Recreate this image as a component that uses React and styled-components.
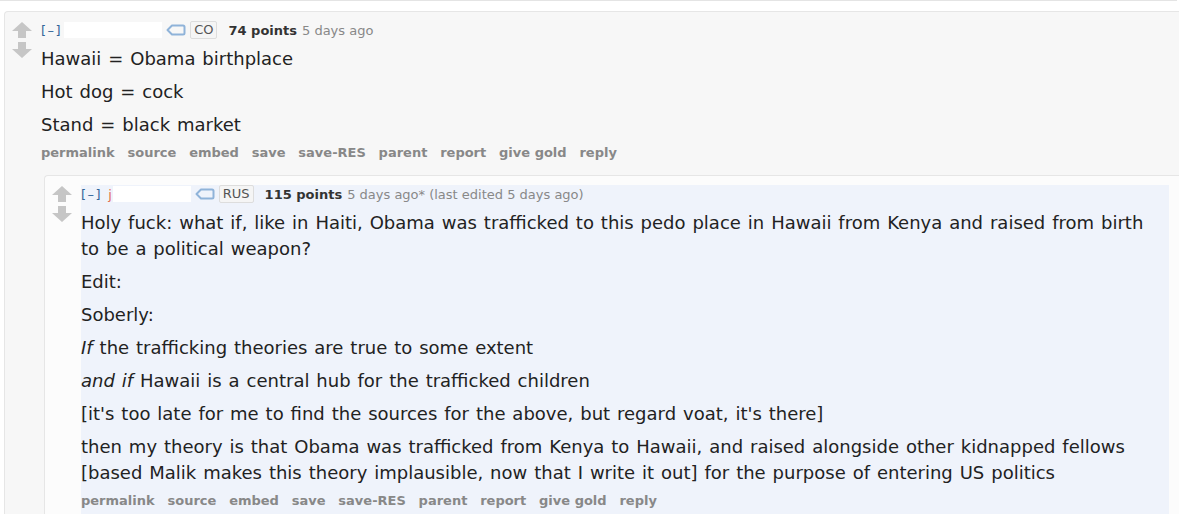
import React from "react";
import styled, { createGlobalStyle } from "styled-components";

const GlobalStyle = createGlobalStyle`
  body {
    margin: 0;
    background: #fff;
    font-family: "DejaVu Sans", Verdana, sans-serif;
    color: #222;
  }
`;

const Page = styled.div`
  width: 1179px;
  height: 517px;
  overflow: hidden;
`;

const PrevEdge = styled.div`
  height: 0;
  margin-right: 2px;
  margin-bottom: 10px;
  border-bottom: 1px solid #e4e4e4;
`;

const Comment = styled.div`
  margin-left: ${(p) => p.$left}px;
  background: ${(p) => p.$bg};
  border: 1px solid #e6e6e6;
  border-right: none;
  border-bottom: none;
  border-top-left-radius: 4px;
  padding-top: ${(p) => p.$pad}px;
  display: flex;
  flex-direction: column;
`;

const Row = styled.div`
  display: flex;
  align-items: flex-start;
`;

const Votes = styled.div`
  width: 36px;
  flex-shrink: 0;
  display: flex;
  flex-direction: column;
  align-items: flex-start;
  padding-left: 7px;
  padding-top: ${(p) => p.$top}px;
  gap: 4px;
  box-sizing: border-box;
`;

const Entry = styled.div`
  flex: 1;
  background: ${(p) => p.$bg || "transparent"};
  margin-right: ${(p) => p.$right || 0}px;
  padding-top: ${(p) => p.$top}px;
  padding-bottom: ${(p) => p.$bottom}px;
`;

const Tagline = styled.div`
  display: flex;
  align-items: center;
  font-size: 13px;
  color: #888;
  height: 18px;
  white-space: nowrap;
`;

const Expand = styled.span`
  color: #369;
  font-size: 13px;
  letter-spacing: 1.5px;
  margin-right: ${(p) => p.$gap}px;
`;

const Redacted = styled.span`
  display: inline-block;
  width: ${(p) => p.$w}px;
  height: 16px;
  background: #fff;
`;

const Stray = styled.span`
  color: #e4714f;
  font-size: 13px;
  margin-right: 1px;
`;

const Flair = styled.span`
  display: inline-block;
  margin-left: 4px;
  border: 1px solid #ddd;
  background: #f5f5f5;
  color: #545454;
  font-size: 13px;
  padding: 1px 3px;
  border-radius: 2px;
  line-height: 14px;
`;

const Score = styled.b`
  color: #333;
  margin-left: 11px;
  margin-right: 5px;
  font-size: 13px;
`;

const Body = styled.div`
  font-size: 18px;
  line-height: 26px;
  word-spacing: 1.2px;
  color: #222;
  margin-top: ${(p) => p.$top}px;
  padding-right: 20px;
  p {
    margin: 0 0 7px 0;
  }
`;

const Buttons = styled.ul`
  list-style: none;
  margin: 0;
  padding: 0;
  display: flex;
  gap: 12.8px;
  margin-top: ${(p) => p.$top}px;
  li {
    font-size: 13px;
    font-weight: bold;
    color: #888;
  }
`;

const Arrow = ({ down }) => (
  <svg width="20" height="16" viewBox="0 0 20 16">
    {down ? (
      <path d="M6 0 H14 V7 H20 L10 16 L0 7 H6 Z" fill="#c6c6c6" />
    ) : (
      <path d="M10 0 L20 9 H14 V16 H6 V9 H0 Z" fill="#c6c6c6" />
    )}
  </svg>
);

const TagIcon = () => (
  <svg width="20" height="12" viewBox="0 0 20 12" style={{ marginLeft: 4 }}>
    <path
      d="M1.5 6 L6 1.5 H17 Q18.5 1.5 18.5 3 V9 Q18.5 10.5 17 10.5 H6 Z"
      fill="none"
      stroke="#8fb3d9"
      strokeWidth="2"
      strokeLinejoin="round"
    />
  </svg>
);

const buttons = ["permalink", "source", "embed", "save", "save-RES", "parent", "report", "give gold", "reply"];

const ButtonRow = ({ top }) => (
  <Buttons $top={top}>
    {buttons.map((b) => (
      <li key={b}>{b}</li>
    ))}
  </Buttons>
);

export default function App() {
  return (
    <Page>
      <GlobalStyle />
      <PrevEdge />
      <Comment $left={4} $bg="#f7f7f7" $pad={0}>
        <Row>
          <Votes $top={10}>
            <Arrow />
            <Arrow down />
          </Votes>
          <Entry $top={9} $bottom={15}>
            <Tagline>
              <Expand $gap={2}>[–]</Expand>
              <Redacted $w={98} />
              <TagIcon />
              <Flair>CO</Flair>
              <Score>74 points</Score>
              <span>5 days ago</span>
            </Tagline>
            <Body $top={7}>
              <p>Hawaii = Obama birthplace</p>
              <p>Hot dog = cock</p>
              <p>Stand = black market</p>
            </Body>
            <ButtonRow top={2} />
          </Entry>
        </Row>
        <Comment $left={39} $bg="#fcfcfc" $pad={9}>
          <Row>
            <Votes $top={1}>
              <Arrow />
              <Arrow down />
            </Votes>
            <Entry $bg="#eff3fb" $right={10} $top={0} $bottom={6}>
              <Tagline>
                <Expand $gap={6}>[–]</Expand>
                <Stray>j</Stray>
                <Redacted $w={78} />
                <TagIcon />
                <Flair>RUS</Flair>
                <Score>115 points</Score>
                <span>5 days ago* (last edited 5 days ago)</span>
              </Tagline>
              <Body $top={7}>
                <p>
                  Holy fuck: what if, like in Haiti, Obama was trafficked to this pedo place in Hawaii from Kenya and raised from birth
                  to be a political weapon?
                </p>
                <p>Edit:</p>
                <p>Soberly:</p>
                <p>
                  <em>If</em> the trafficking theories are true to some extent
                </p>
                <p>
                  <em>and if</em> Hawaii is a central hub for the trafficked children
                </p>
                <p>[it's too late for me to find the sources for the above, but regard voat, it's there]</p>
                <p>
                  then my theory is that Obama was trafficked from Kenya to Hawaii, and raised alongside other kidnapped fellows
                  [based Malik makes this theory implausible, now that I write it out] for the purpose of entering US politics
                </p>
              </Body>
              <ButtonRow top={2} />
            </Entry>
          </Row>
        </Comment>
      </Comment>
    </Page>
  );
}
